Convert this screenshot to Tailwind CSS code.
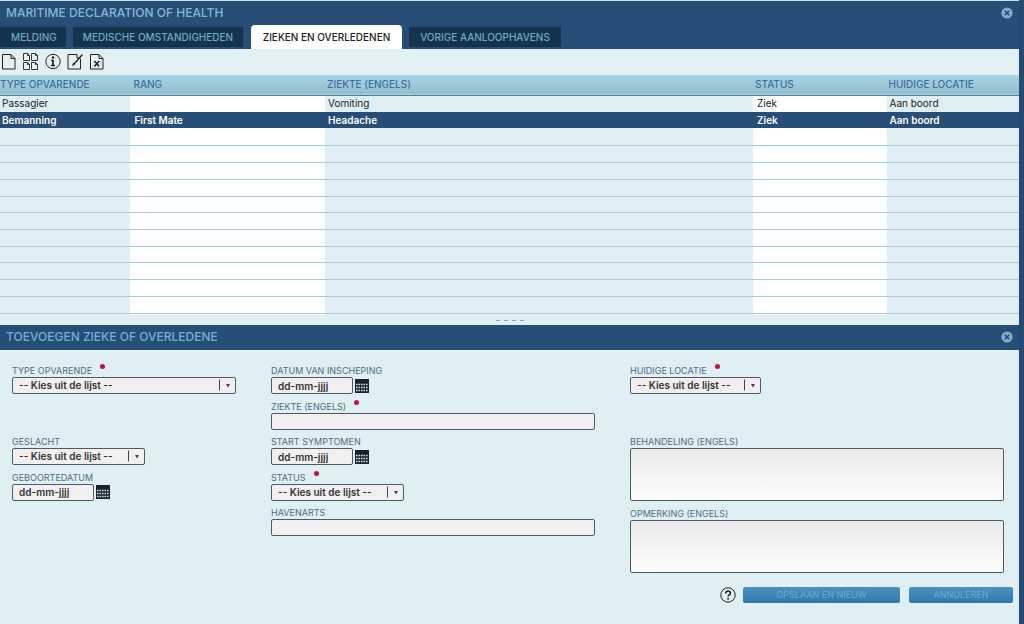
<!DOCTYPE html>
<html lang="nl">
<head>
<meta charset="utf-8">
<title>Maritime Declaration of Health</title>
<script src="https://cdn.jsdelivr.net/npm/@tailwindcss/browser@4"></script>
</head>
<body class="min-h-screen bg-[#234a72] font-['Inter',sans-serif] text-[10px] text-[#222]">
<svg class="hidden" aria-hidden="true">
  <symbol id="close" viewBox="0 0 12 12"><circle cx="6" cy="6" r="5.6" fill="#84acce"/><path d="M3.8 3.8l4.400 4.400M8.200 3.800L3.800 8.200" stroke="#234a72" stroke-width="1.600"/></symbol>
  <symbol id="calendar" viewBox="0 0 14 14"><path d="M0 0h14v14H0z" fill="#18222c"/><path d="M1 5.500h12M1 8.500h12M1 11.500h12" stroke="#d5e2e8" stroke-width="1.600" stroke-dasharray="1.600 0.900"/></symbol>
  <symbol id="arrow" viewBox="0 0 18 16"><path d="M1.500 2.500v11" stroke="#444"/><path d="M8 7h4l-2 3.500z" fill="#444"/></symbol>
</svg>
<div class="mr-[5px] flex min-h-screen flex-col border-t border-[#c3e6f5] bg-[#e0eff4]">
  <header class="bg-[#274e76]">
    <div class="flex h-6 items-center justify-between pr-[6px] pl-[6px]">
      <h1 class="text-[12px] font-medium text-[#83b9d6]">MARITIME DECLARATION OF HEALTH</h1>
      <button type="button" aria-label="Sluiten"><svg class="size-3"><use href="#close"/></svg></button>
    </div>
    <nav class="flex h-6 items-center text-[10px] font-medium text-[#6fa9c6]">
      <a href="#" class="flex h-5 w-[66px] items-center bg-[#15334d] pl-[11px]">MELDING</a>
      <a href="#" class="ml-[7px] flex h-5 w-[170px] items-center justify-center bg-[#15334d]">MEDISCHE OMSTANDIGHEDEN</a>
      <a href="#" aria-current="page" class="ml-[8px] flex h-6 w-[151px] items-center justify-center rounded-t bg-white text-[#222]">ZIEKEN EN OVERLEDENEN</a>
      <a href="#" class="ml-[7px] flex h-5 w-[152px] items-center justify-center bg-[#15334d]">VORIGE AANLOOPHAVENS</a>
    </nav>
  </header>

  <div class="flex h-[26px] items-center bg-[#e3f1f5] pb-[2px] pl-[1px]">
    <button type="button" aria-label="Nieuw" class="mr-[6px]"><svg class="h-[17px] w-4" viewBox="0 0 16 17" fill="none" stroke="#222"><path d="M1.500 1.500h8.500l4 4v10.500H1.500zM10 1.500v4h4"/></svg></button>
    <button type="button" aria-label="Kopiëren" class="mr-[6px]"><svg class="h-[17px] w-4" viewBox="0 0 16 17" fill="none" stroke="#222" stroke-width="0.900"><path d="M0.500 0.500h4l2 2v5h-6zM4.500 0.500v2h2M8.500 0.500h4l2 2v5h-6zM12.500 0.500v2h2M0.500 9.500h4l2 2v5h-6zM4.500 9.500v2h2M8.500 9.500h4l2 2v5h-6zM12.500 9.500v2h2"/></svg></button>
    <button type="button" aria-label="Informatie" class="mr-[6px]"><svg class="h-[17px] w-4" viewBox="0 0 16 17" fill="none" stroke="#222"><circle cx="8" cy="8.500" r="7.200"/><path d="M8 7v5.500M6.300 7.300H8M6 12.500h4" stroke-width="1.700"/><circle cx="8" cy="4.500" r="1.200" fill="#222" stroke="none"/></svg></button>
    <button type="button" aria-label="Bewerken" class="mr-[6px]"><svg class="h-[17px] w-4" viewBox="0 0 16 17" fill="none" stroke="#222"><path d="M13.500 5.500V16H1V1.500h9v3.500h3"/><path d="M15.500 1.500L6.500 11.500" stroke-width="1.400"/><path d="M5 13l1-3 2 1.800z" fill="#222" stroke="none"/></svg></button>
    <button type="button" aria-label="Verwijderen"><svg class="h-[17px] w-4" viewBox="0 0 16 17" fill="none" stroke="#222"><path d="M1.500 1.500h8.500l4 4v10.500H1.500zM10 1.500v4h4"/><path d="M5.300 8l5 5.500M10.300 8l-5 5.500" stroke-width="1.600"/></svg></button>
  </div>

  <table class="w-full table-fixed border-collapse text-left leading-[13px]">
    <colgroup>
      <col class="w-[12.8%] bg-[#e0eff4]"><col class="w-[19.1%] bg-white"><col class="w-[42%] bg-[#e0eff4]"><col class="w-[13.1%] bg-white"><col class="bg-[#e0eff4]">
    </colgroup>
    <thead>
      <tr class="h-5 border-b border-[#54788a] bg-linear-to-b from-[#a9d3e2] to-[#90bfd1] text-[#3a719c]">
        <th class="p-0 font-medium">TYPE OPVARENDE</th><th class="p-0 pl-[3px] font-medium">RANG</th><th class="p-0 pl-[2px] font-medium">ZIEKTE (ENGELS)</th><th class="p-0 pl-[2px] font-medium">STATUS</th><th class="p-0 pl-[2px] font-medium">HUIDIGE LOCATIE</th>
      </tr>
    </thead>
    <tbody>
      <tr class="h-[17px]"><td class="pl-[2px]">Passagier</td><td></td><td class="pl-[3px]">Vomiting</td><td class="pl-[4px]">Ziek</td><td class="pl-[3px]">Aan boord</td></tr>
      <tr class="h-4 bg-[#274e76] font-semibold text-white"><td class="pl-[2px]">Bemanning</td><td class="pl-[4px]">First Mate</td><td class="pl-[3px]">Headache</td><td class="pl-[4px]">Ziek</td><td class="pl-[3px]">Aan boord</td></tr>
      <tr class="h-[17px] border-b border-[#a6cbda]"><td></td><td></td><td></td><td></td><td></td></tr>
      <tr class="h-[17px] border-b border-[#a6cbda]"><td></td><td></td><td></td><td></td><td></td></tr>
      <tr class="h-[17px] border-b border-[#a6cbda]"><td></td><td></td><td></td><td></td><td></td></tr>
      <tr class="h-[17px] border-b border-[#a6cbda]"><td></td><td></td><td></td><td></td><td></td></tr>
      <tr class="h-4 border-b border-[#a6cbda]"><td></td><td></td><td></td><td></td><td></td></tr>
      <tr class="h-[17px] border-b border-[#a6cbda]"><td></td><td></td><td></td><td></td><td></td></tr>
      <tr class="h-[17px] border-b border-[#a6cbda]"><td></td><td></td><td></td><td></td><td></td></tr>
      <tr class="h-4 border-b border-[#a6cbda]"><td></td><td></td><td></td><td></td><td></td></tr>
      <tr class="h-[17px] border-b border-[#a6cbda]"><td></td><td></td><td></td><td></td><td></td></tr>
      <tr class="h-[17px] border-b border-[#a6cbda]"><td></td><td></td><td></td><td></td><td></td></tr>
      <tr class="h-[17px] border-b border-[#a6cbda]"><td></td><td></td><td></td><td></td><td></td></tr>
      <tr class="h-[2px]"><td></td><td></td><td></td><td></td><td></td></tr>
    </tbody>
  </table>
  <div class="flex h-[10px] items-center justify-center"><svg class="h-1 w-7" viewBox="0 0 28 4"><path d="M0 2.500h28" stroke="#86a5b3" stroke-dasharray="4 4"/></svg></div>

  <section class="flex-1">
    <div class="flex h-[25px] items-center justify-between bg-[#274e76] px-[6px] pb-[2px]">
      <h2 class="text-[12px] font-medium text-[#74b0cf]">TOEVOEGEN ZIEKE OF OVERLEDENE</h2>
      <button type="button" aria-label="Sluiten"><svg class="size-3"><use href="#close"/></svg></button>
    </div>
    <form class="pt-[14px]">
      <div class="grid h-[213px] grid-cols-[259fr_359fr_374fr] grid-rows-6 pr-[15px] pl-3 text-[9px] text-[#4f6d7c]">
        <div class="col-start-1 row-start-1">
          <div class="flex h-[13px] gap-2"><label for="type" class="leading-[14px]">TYPE OPVARENDE</label><span class="size-[5px] rounded-full bg-[#c4103c]"></span></div>
          <div class="relative h-[17px] w-[224px]"><select id="type" class="h-full w-full appearance-none rounded-xs border border-[#4d5c64] bg-[#f2eff1] pl-[6px] text-[10px] leading-[13px] font-semibold text-[#333]"><option>-- Kies uit de lijst --</option></select><svg class="pointer-events-none absolute top-0 right-0 h-4 w-[18px]"><use href="#arrow"/></svg></div>
        </div>
        <div class="col-start-1 row-start-3">
          <div class="flex h-[13px]"><label for="geslacht" class="leading-[14px]">GESLACHT</label></div>
          <div class="relative h-[17px] w-[133px]"><select id="geslacht" class="h-full w-full appearance-none rounded-xs border border-[#4d5c64] bg-[#f2eff1] pl-[6px] text-[10px] leading-[13px] font-semibold text-[#333]"><option>-- Kies uit de lijst --</option></select><svg class="pointer-events-none absolute top-0 right-0 h-4 w-[18px]"><use href="#arrow"/></svg></div>
        </div>
        <div class="col-start-1 row-start-4">
          <div class="flex h-[13px]"><label for="geboorte" class="leading-[14px]">GEBOORTEDATUM</label></div>
          <div class="flex h-[17px] items-center gap-[2px]"><input id="geboorte" type="text" value="dd-mm-jjjj" class="h-full w-[82px] rounded-xs border border-[#4d5c64] bg-[#f2eff1] pl-[6px] text-[10px] font-semibold text-[#333]"><button type="button" aria-label="Kalender"><svg class="size-[14px]"><use href="#calendar"/></svg></button></div>
        </div>

        <div class="col-start-2 row-start-1">
          <div class="flex h-[13px]"><label for="inscheping" class="leading-[14px]">DATUM VAN INSCHEPING</label></div>
          <div class="flex h-[17px] items-center gap-[2px]"><input id="inscheping" type="text" value="dd-mm-jjjj" class="h-full w-[82px] rounded-xs border border-[#4d5c64] bg-[#f2eff1] pl-[6px] text-[10px] font-semibold text-[#333]"><button type="button" aria-label="Kalender"><svg class="size-[14px]"><use href="#calendar"/></svg></button></div>
        </div>
        <div class="col-start-2 row-start-2">
          <div class="flex h-[13px] gap-2"><label for="ziekte" class="leading-[14px]">ZIEKTE (ENGELS)</label><span class="size-[5px] rounded-full bg-[#c4103c]"></span></div>
          <div class="h-[17px] pr-[35px]"><input id="ziekte" type="text" class="block h-full w-full rounded-xs border border-[#4d5c64] bg-[#f2eff1] px-[6px] text-[10px] text-[#333]"></div>
        </div>
        <div class="col-start-2 row-start-3">
          <div class="flex h-[13px]"><label for="start" class="leading-[14px]">START SYMPTOMEN</label></div>
          <div class="flex h-[17px] items-center gap-[2px]"><input id="start" type="text" value="dd-mm-jjjj" class="h-full w-[82px] rounded-xs border border-[#4d5c64] bg-[#f2eff1] pl-[6px] text-[10px] font-semibold text-[#333]"><button type="button" aria-label="Kalender"><svg class="size-[14px]"><use href="#calendar"/></svg></button></div>
        </div>
        <div class="col-start-2 row-start-4">
          <div class="flex h-[13px] gap-2"><label for="status" class="leading-[14px]">STATUS</label><span class="size-[5px] rounded-full bg-[#c4103c]"></span></div>
          <div class="relative h-[17px] w-[133px]"><select id="status" class="h-full w-full appearance-none rounded-xs border border-[#4d5c64] bg-[#f2eff1] pl-[6px] text-[10px] leading-[13px] font-semibold text-[#333]"><option>-- Kies uit de lijst --</option></select><svg class="pointer-events-none absolute top-0 right-0 h-4 w-[18px]"><use href="#arrow"/></svg></div>
        </div>
        <div class="col-start-2 row-start-5">
          <div class="flex h-[13px]"><label for="havenarts" class="leading-[14px]">HAVENARTS</label></div>
          <div class="h-[17px] pr-[35px]"><input id="havenarts" type="text" class="block h-full w-full rounded-xs border border-[#4d5c64] bg-[#f2eff1] px-[6px] text-[10px] text-[#333]"></div>
        </div>

        <div class="col-start-3 row-start-1">
          <div class="flex h-[13px] gap-2"><label for="locatie" class="leading-[14px]">HUIDIGE LOCATIE</label><span class="size-[5px] rounded-full bg-[#c4103c]"></span></div>
          <div class="relative h-[17px] w-[131px]"><select id="locatie" class="h-full w-full appearance-none rounded-xs border border-[#4d5c64] bg-[#f2eff1] pl-[6px] text-[10px] leading-[13px] font-semibold text-[#333]"><option>-- Kies uit de lijst --</option></select><svg class="pointer-events-none absolute top-0 right-0 h-4 w-[18px]"><use href="#arrow"/></svg></div>
        </div>
        <div class="col-start-3 row-span-4 row-start-3 flex flex-col">
          <label for="behandeling" class="h-[13px] leading-[14px]">BEHANDELING (ENGELS)</label>
          <textarea id="behandeling" class="h-[53px] resize-none rounded-xs border border-[#4d5c64] bg-linear-to-b from-[#e9e9e9] to-[#fdfdfd] p-1 text-[10px] text-[#333]"></textarea>
          <label for="opmerking" class="mt-[6px] h-[13px] leading-[14px]">OPMERKING (ENGELS)</label>
          <textarea id="opmerking" class="h-[53px] resize-none rounded-xs border border-[#4d5c64] bg-linear-to-b from-[#e9e9e9] to-[#fdfdfd] p-1 text-[10px] text-[#333]"></textarea>
        </div>
      </div>
      <div class="mt-[10px] flex items-center justify-end gap-[9px] pr-[6px] text-[9px] text-[#6fa9cb]">
        <button type="button" aria-label="Help" class="-mr-[2px]"><svg class="size-4" viewBox="0 0 16 16" fill="none"><circle cx="8" cy="8" r="7.200" stroke="#222"/><path d="M5.700 6.400c0-3.200 4.700-3 4.700-.2 0 1.600-2.300 1.700-2.300 3.400" stroke="#222" stroke-width="1.600"/><circle cx="8.100" cy="11.800" r="1" fill="#222"/></svg></button>
        <button type="submit" class="h-4 w-[157px] rounded-xs bg-linear-to-b from-[#4a93bf] to-[#3078a8]">OPSLAAN EN NIEUW</button>
        <button type="button" class="h-4 w-[104px] rounded-xs bg-linear-to-b from-[#4a93bf] to-[#3078a8]">ANNULEREN</button>
      </div>
    </form>
  </section>
</div>
</body>
</html>
